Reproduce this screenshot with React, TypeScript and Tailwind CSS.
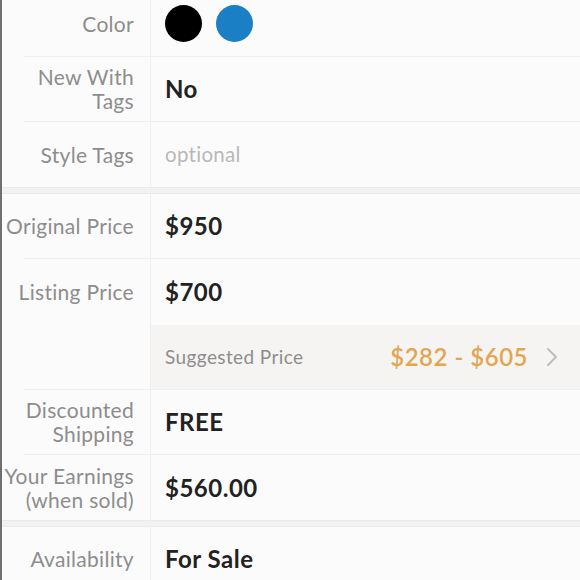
import React from "react";

const font = { fontFamily: "Lato, 'Open Sans', sans-serif" };

function Row({
  label,
  children,
  border = true,
  h = "h-[65px]",
  valueClass = "",
}: {
  label?: React.ReactNode;
  children?: React.ReactNode;
  border?: boolean;
  h?: string;
  valueClass?: string;
}) {
  return (
    <div className={`shrink-0 pl-[22px] ${h}`}>
      <div className={`flex h-full ${border ? "border-b border-[#efefef]" : ""}`}>
        <div className="w-[126px] shrink-0 flex items-center justify-end pr-[16px] text-right text-[21px] leading-[24px] text-[#8d8d8d] tracking-[0.3px] whitespace-nowrap">
          {label}
        </div>
        <div className={`flex-1 flex items-center border-l border-[#efefef] pl-[14px] ${valueClass}`}>
          {children}
        </div>
      </div>
    </div>
  );
}

function Band() {
  return <div className="shrink-0 h-[7px] bg-[#f3f2f2] border-y border-[#eaeaea]" />;
}

const val = "text-[24px] font-bold text-[#222] tracking-[0.5px]";

export default function App() {
  return (
    <div className="w-[580px] h-[580px] overflow-hidden bg-[#fcfbfb] flex" style={font}>
      <div className="w-[2px] shrink-0 bg-[#707070]" />
      <div className="flex-1 flex flex-col">
        <Row label={<span className="pb-[9px]">Color</span>} h="h-[57px]">
          <div className="flex items-center gap-[14px] pb-[9px]">
            <div className="w-[37px] h-[37px] rounded-full bg-black" />
            <div className="w-[37px] h-[37px] rounded-full bg-[#1a7fc4]" />
          </div>
        </Row>
        <Row label={<span>New With<br />Tags</span>}>
          <span className={val}>No</span>
        </Row>
        <Row label="Style Tags" border={false}>
          <span className="text-[20.5px] text-[#b8b8b8] tracking-[0.3px]">optional</span>
        </Row>
        <Band />
        <Row label="Original Price">
          <span className={val}>$950</span>
        </Row>
        <Row label="Listing Price" border={false} h="h-[66px]">
          <span className={val}>$700</span>
        </Row>
        <Row valueClass="bg-[#f5f4f2] pr-[22px]">
          <div className="flex flex-1 items-center justify-between">
            <span className="text-[19px] text-[#8d8d8d] tracking-[0.4px]">Suggested Price</span>
            <div className="flex items-center gap-[18px]">
              <span className="text-[24px] font-semibold text-[#e3a650] tracking-[0.5px]">$282 - $605</span>
              <svg width="12" height="20" viewBox="0 0 12 20" fill="none">
                <path d="M2 2l8 8-8 8" stroke="#bdbdbd" strokeWidth="2" strokeLinecap="round" strokeLinejoin="round" />
              </svg>
            </div>
          </div>
        </Row>
        <Row label={<span>Discounted<br />Shipping</span>}>
          <span className={val}>FREE</span>
        </Row>
        <Row label={<span>Your Earnings<br />(when sold)</span>} border={false}>
          <span className={val}>$560.00</span>
        </Row>
        <Band />
        <Row label="Availability">
          <span className={val}>For Sale</span>
        </Row>
      </div>
    </div>
  );
}
